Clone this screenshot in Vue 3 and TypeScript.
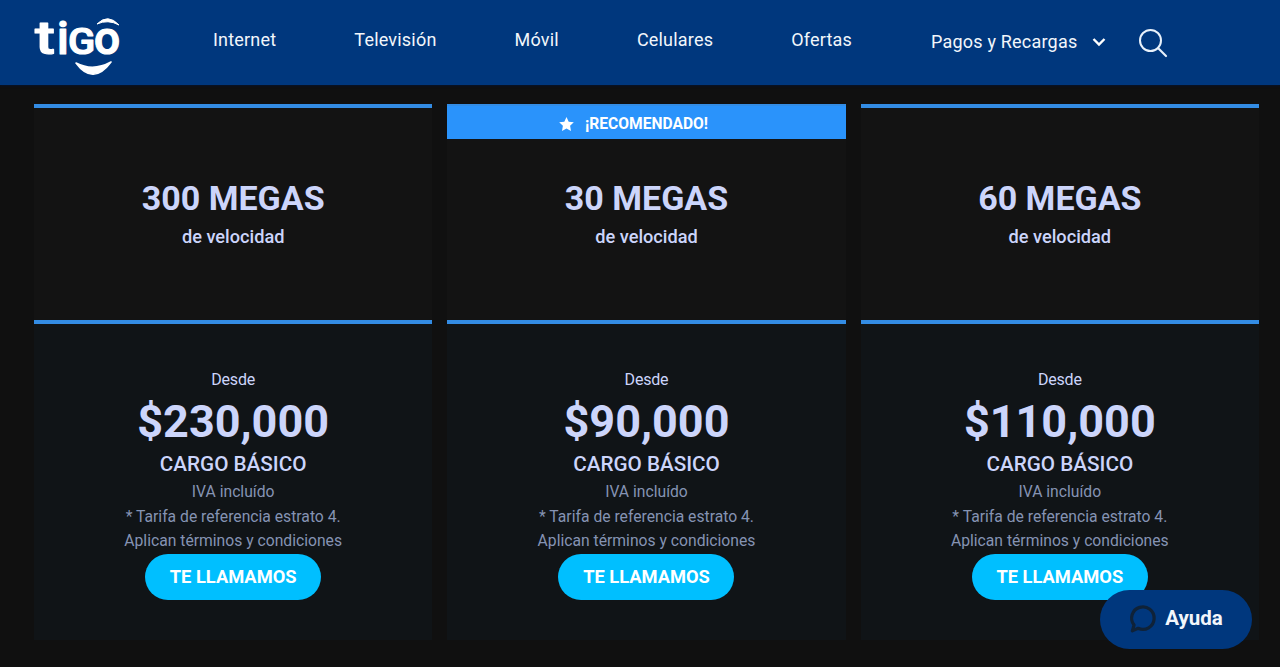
<script setup lang="ts">
interface Plan { speed: string; price: string; recommended: boolean }
const nav: string[] = ['Internet', 'Televisión', 'Móvil', 'Celulares', 'Ofertas']
const plans: Plan[] = [
  { speed: '300 MEGAS', price: '$230,000', recommended: false },
  { speed: '30 MEGAS', price: '$90,000', recommended: true },
  { speed: '60 MEGAS', price: '$110,000', recommended: false },
]
</script>

<template>
  <div class="page">
    <header class="header">
      <svg class="logo" width="90" height="66" viewBox="0 0 90 66" role="img" aria-label="tigo">
        <text class="logo-text logo-t" transform="translate(1 42) scale(1.3 1)">t</text>
        <text class="logo-text logo-t" transform="translate(23 42)">i</text>
        <text class="logo-text logo-c" transform="translate(34 42) scale(1.08 1)">G</text>
        <text class="logo-text logo-t" transform="translate(60 42)">o</text>
        <path d="M63 12 Q74 1 85 13 Q74 7 63 12 Z" fill="#fff" stroke="#fff" stroke-width="1" stroke-linejoin="round" />
        <path d="M42 51 Q59 74 77 50 Q59 60 42 51 Z" fill="#fff" stroke="#fff" stroke-width="1.6" stroke-linejoin="round" />
      </svg>
      <nav class="nav">
        <a v-for="item in nav" :key="item" class="nav-link">{{ item }}</a>
        <a class="nav-link nav-drop">
          Pagos y Recargas
          <svg width="14" height="10" viewBox="0 0 14 10">
            <path d="M1.5 2 L7 7.5 L12.5 2" fill="none" stroke="#fff" stroke-width="2.4" />
          </svg>
        </a>
        <svg class="search" width="30" height="30" viewBox="0 0 30 30">
          <circle cx="12.5" cy="12.5" r="10.5" fill="none" stroke="#e8f1fb" stroke-width="2" />
          <path d="M20 20 L28 28" stroke="#e8f1fb" stroke-width="2.2" stroke-linecap="round" />
        </svg>
      </nav>
    </header>

    <main class="plans">
      <article v-for="plan in plans" :key="plan.speed" class="plan">
        <section class="plan-top">
          <div v-if="plan.recommended" class="ribbon">
            <svg width="15" height="14" viewBox="0 0 24 23">
              <path d="M12 0 L15.6 7.6 L24 8.7 L17.9 14.5 L19.4 23 L12 18.9 L4.6 23 L6.1 14.5 L0 8.7 L8.4 7.6 Z" fill="#fff" />
            </svg>
            <span>¡RECOMENDADO!</span>
          </div>
          <h2 class="speed">{{ plan.speed }}</h2>
          <p class="speed-sub">de velocidad</p>
        </section>
        <section class="plan-bottom">
          <p class="from">Desde</p>
          <p class="price">{{ plan.price }}</p>
          <p class="charge">CARGO BÁSICO</p>
          <p class="note">IVA incluído</p>
          <p class="note">* Tarifa de referencia estrato 4.</p>
          <p class="note">Aplican términos y condiciones</p>
          <button class="cta">TE LLAMAMOS</button>
        </section>
      </article>
    </main>

    <button class="help">
      <svg width="30" height="30" viewBox="0 0 28 28">
        <path d="M5 26 L6.6 20.6 A10.5 10.5 0 1 1 10.4 23.6 Z" fill="none" stroke="#0f2238" stroke-width="3" stroke-linejoin="round" />
      </svg>
      <span>Ayuda</span>
    </button>
  </div>
</template>

<style>
html, body { margin: 0; background: #101010; }
</style>

<style scoped>
.page {
  height: 667px;
  overflow: hidden;
  background: #101010;
  font-family: Roboto, "Liberation Sans", sans-serif;
}
.header {
  height: 85px;
  box-sizing: border-box;
  background: #00377d;
  display: flex;
  align-items: center;
  padding-left: 34px;
  box-shadow: 0 1px 2px rgba(0, 20, 60, 0.6);
}
.logo { flex: none; margin-top: 5px; overflow: visible; }
.logo-text {
  font-family: Roboto, sans-serif;
  font-weight: 500;
  fill: #fff;
  stroke: #fff;
  stroke-width: 1.2px;
  stroke-linejoin: round;
}
.logo-t { font-size: 46px; }
.logo-c { font-size: 37px; }
.nav {
  display: flex;
  align-items: center;
  gap: 78px;
  margin-left: 89px;
  margin-top: -5px;
}
.nav-link {
  color: #f2f6fb;
  font-size: 18px;
  line-height: 24px;
  letter-spacing: 0.2px;
  white-space: nowrap;
}
.nav-drop {
  display: flex;
  align-items: center;
  gap: 15px;
  margin: 4px 0 0 1px;
}
.search { margin: 5px 0 0 -46px; }
.plans {
  display: flex;
  gap: 15px;
  padding: 19px 21px 0 34px;
}
.plan { flex: 1; min-width: 0; text-align: center; }
.plan-top {
  position: relative;
  height: 216px;
  box-sizing: border-box;
  background: #131313;
  border-top: 4px solid #338ce4;
  padding-top: 70px;
}
.ribbon {
  position: absolute;
  top: -2px;
  left: 0;
  right: 0;
  height: 33px;
  padding: 3px 26px 0 0;
  box-sizing: border-box;
  background: #2a93fb;
  color: #fff;
  font-weight: 700;
  font-size: 15.6px;
  display: flex;
  align-items: center;
  justify-content: center;
  gap: 11px;
}
.speed {
  margin: 0;
  font-size: 34px;
  line-height: 40px;
  font-weight: 700;
  color: #ccd5fb;
}
.speed-sub {
  margin: 8px 0 0;
  font-size: 18.2px;
  line-height: 22px;
  font-weight: 500;
  color: #ccd5fb;
}
.plan-bottom {
  height: 320px;
  box-sizing: border-box;
  background: #101417;
  border-top: 4px solid #338ce4;
  padding-top: 46px;
  display: flex;
  flex-direction: column;
  align-items: center;
}
.plan-bottom p { margin: 0; }
.from { font-size: 16px; line-height: 20px; letter-spacing: -0.2px; color: #ccd5fb; }
.price {
  font-size: 45px;
  line-height: 52px;
  font-weight: 700;
  color: #ccd5fb;
  margin-top: 6px !important;
}
.charge {
  font-size: 20.7px;
  line-height: 26px;
  font-weight: 500;
  color: #ccd5fb;
  margin-top: 3px !important;
}
.note {
  font-size: 15.7px;
  line-height: 24.5px;
  color: #8593b3;
}
.charge + .note { margin-top: 3px !important; }
.cta {
  width: 176px;
  height: 46px;
  margin-top: 0;
  border: none;
  border-radius: 23px;
  background: #00bfff;
  color: #fff;
  font-family: inherit;
  font-size: 18.3px;
  font-weight: 700;
}
.help {
  position: fixed;
  left: 1100px;
  top: 590px;
  width: 152px;
  height: 59px;
  border: none;
  border-radius: 30px;
  background: #00377d;
  color: #f2f6fb;
  font-family: inherit;
  font-size: 20.5px;
  font-weight: 700;
  display: flex;
  align-items: center;
  justify-content: center;
  gap: 8px;
  padding: 0 2px 3px 0;
}
</style>
